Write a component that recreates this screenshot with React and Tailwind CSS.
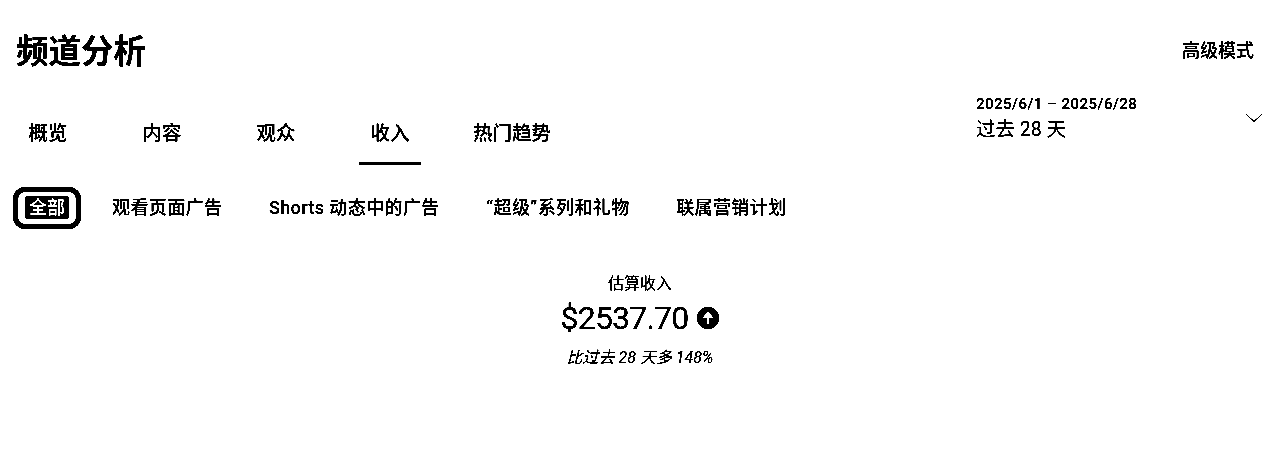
import React from "react";

const font = "font-['Roboto','Noto_Sans_CJK_SC',sans-serif]";

const tabs = ["概览", "内容", "观众", "收入", "热门趋势"];
const subTabs = ["观看页面广告", "Shorts 动态中的广告", "“超级”系列和礼物", "联属营销计划"];

export default function App() {
  return (
    <div className={`${font} w-[1280px] h-[452px] bg-white text-black overflow-hidden brightness-75 contrast-[12]`}>
      <header className="flex items-center justify-between pl-4 pr-[26px] pt-[29px]">
        <h1 className="text-[32.5px] leading-[46px] font-bold">频道分析</h1>
        <button className="text-[18px] leading-[24px] font-medium -translate-y-px">高级模式</button>
      </header>

      <div className="flex items-start justify-between pl-[17px] pr-[17px] mt-[19px]">
        <nav className="flex gap-[52px] pt-[24px]">
          {tabs.map((t) => (
            <div
              key={t}
              className={`min-w-[62px] h-[47px] text-center text-[19.5px] leading-[32px] font-medium ${
                t === "收入" ? "border-b-[3px] border-black" : ""
              }`}
            >
              {t}
            </div>
          ))}
        </nav>
        <div className="flex w-[287px] justify-between">
          <div>
            <div className="text-[15px] leading-[20px] font-medium tracking-[0.5px]">2025/6/1 – 2025/6/28</div>
            <div className="text-[19.5px] leading-[24px] mt-[4px]">过去 28 天</div>
          </div>
          <svg width="18" height="10" viewBox="0 0 18 10" fill="none" stroke="black" strokeWidth="1" className="mt-[19px]">
            <path d="M1.5 1.5L9 8.5l7.5-7" />
          </svg>
        </div>
      </div>

      <nav className="flex items-center pl-[13px] mt-[22px] text-[18px] leading-[24px] font-medium">
        <div className="flex items-center justify-center w-[68px] h-[42px] border-[5px] border-black rounded-[12px]">
          <span className="bg-black text-white font-bold rounded-[3px] px-[4px] leading-[23px] mb-[2px]">全部</span>
        </div>
        <div className="flex gap-[46.5px] ml-[31px]">
          {subTabs.map((t) => (
            <span key={t} className="tracking-[0.4px]">{t}</span>
          ))}
        </div>
      </nav>

      <section className="flex flex-col items-center mt-[43px]">
        <div className="text-[16px] leading-[24px]">估算收入</div>
        <div className="flex items-center gap-[9px] mt-[2px]">
          <span className="text-[32px] leading-[40px] tracking-[-0.8px]">$2537.70</span>
          <svg width="22" height="22" viewBox="0 0 22 22">
            <circle cx="11" cy="11" r="11" fill="black" />
            <path d="M11 17.5V7" fill="none" stroke="white" strokeWidth="3" />
            <path d="M11 4.5L17 11H5Z" fill="white" />
          </svg>
        </div>
        <div className="text-[16px] leading-[20px] italic mt-[10px]">比过去 28 天多 148%</div>
      </section>
    </div>
  );
}
